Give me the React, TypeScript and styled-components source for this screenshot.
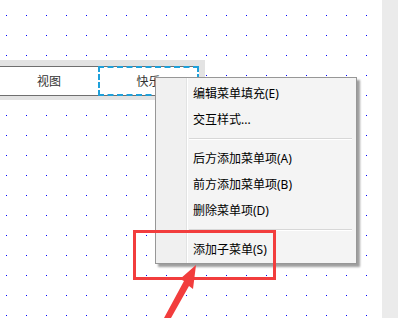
import React from "react";
import styled, { createGlobalStyle } from "styled-components";

const Global = createGlobalStyle`
  html, body { margin: 0; padding: 0; background: #fff; }
  body { width: 398px; height: 318px; overflow: hidden; font-family: "Noto Sans", "Noto Sans CJK SC", sans-serif; }
`;

const Page = styled.div`
  position: relative;
  display: flex;
  width: 398px;
  height: 318px;
  overflow: hidden;
`;

const Canvas = styled.div`
  flex: 1;
  padding-top: 60px;
  background-color: #fff;
  background-image: linear-gradient(to right, transparent 1px, #fff 1px),
    linear-gradient(to bottom, #0000ff 1px, transparent 1px);
  background-size: 20px 20px;
  background-position: 6px 15px;
`;

const Scrollbar = styled.div`
  width: 16px;
  background: #ebebeb;
`;

const Strip = styled.div`
  width: 205px;
  box-sizing: border-box;
  padding: 6px 6px 4px 0;
  background: #e3e3e3;
`;

const Bar = styled.div`
  display: flex;
  height: 30px;
  box-sizing: border-box;
  background: #fff;
  border-top: 1px solid #6f6f6f;
  border-bottom: 1px solid #6f6f6f;
`;

const BarItem = styled.div<{ $selected?: boolean }>`
  width: ${(p) => (p.$selected ? "101px" : "98px")};
  box-sizing: border-box;
  display: flex;
  align-items: center;
  justify-content: center;
  font-size: 12px;
  color: #333;
  ${(p) =>
    p.$selected
      ? `border: 2px dashed #1ea0da; margin: -1px 0; height: 30px;`
      : ``}
`;

const Menu = styled.div`
  position: absolute;
  left: 155px;
  top: 77px;
  width: 202px;
  height: 187px;
  box-sizing: border-box;
  border: 1px solid #979797;
  padding: 2px 0 1px;
  background: linear-gradient(
    to right,
    #f0f0f0 30px,
    #e2e3e3 30px,
    #e2e3e3 31px,
    #ffffff 31px,
    #ffffff 32px,
    #f4f4f4 32px
  );
  box-shadow: 3px 3px 2px rgba(0, 0, 0, 0.38);
`;

const MenuItem = styled.div`
  height: 26px;
  display: flex;
  align-items: center;
  padding-left: 37px;
  font-size: 12px;
  color: #000;
  white-space: nowrap;
`;

const Separator = styled.div`
  height: 2px;
  margin: 6px 4px 5px 33px;
  border-top: 1px solid #d7d7d7;
  box-sizing: border-box;
  background: #fff;
`;

const Highlight = styled.div`
  position: absolute;
  left: 133px;
  top: 230px;
  width: 143px;
  height: 50px;
  box-sizing: border-box;
  border: 3px solid #f23d3d;
`;

const Arrow = styled.svg`
  position: absolute;
  left: 160px;
  top: 262px;
`;

export default function App() {
  return (
    <>
      <Global />
      <Page>
        <Canvas>
          <Strip>
            <Bar>
              <BarItem>视图</BarItem>
              <BarItem $selected>快乐</BarItem>
            </Bar>
          </Strip>
        </Canvas>
        <Scrollbar />
        <Menu>
          <MenuItem>编辑菜单填充(E)</MenuItem>
          <MenuItem>交互样式...</MenuItem>
          <Separator />
          <MenuItem>后方添加菜单项(A)</MenuItem>
          <MenuItem>前方添加菜单项(B)</MenuItem>
          <MenuItem>删除菜单项(D)</MenuItem>
          <Separator />
          <MenuItem>添加子菜单(S)</MenuItem>
        </Menu>
        <Highlight />
        <Arrow width="40" height="56" viewBox="0 0 40 56">
          <polygon
            points="36,3 20,17 24,19 4,56 11,56 29,24 33,27"
            fill="#f23d3d"
          />
        </Arrow>
      </Page>
    </>
  );
}
